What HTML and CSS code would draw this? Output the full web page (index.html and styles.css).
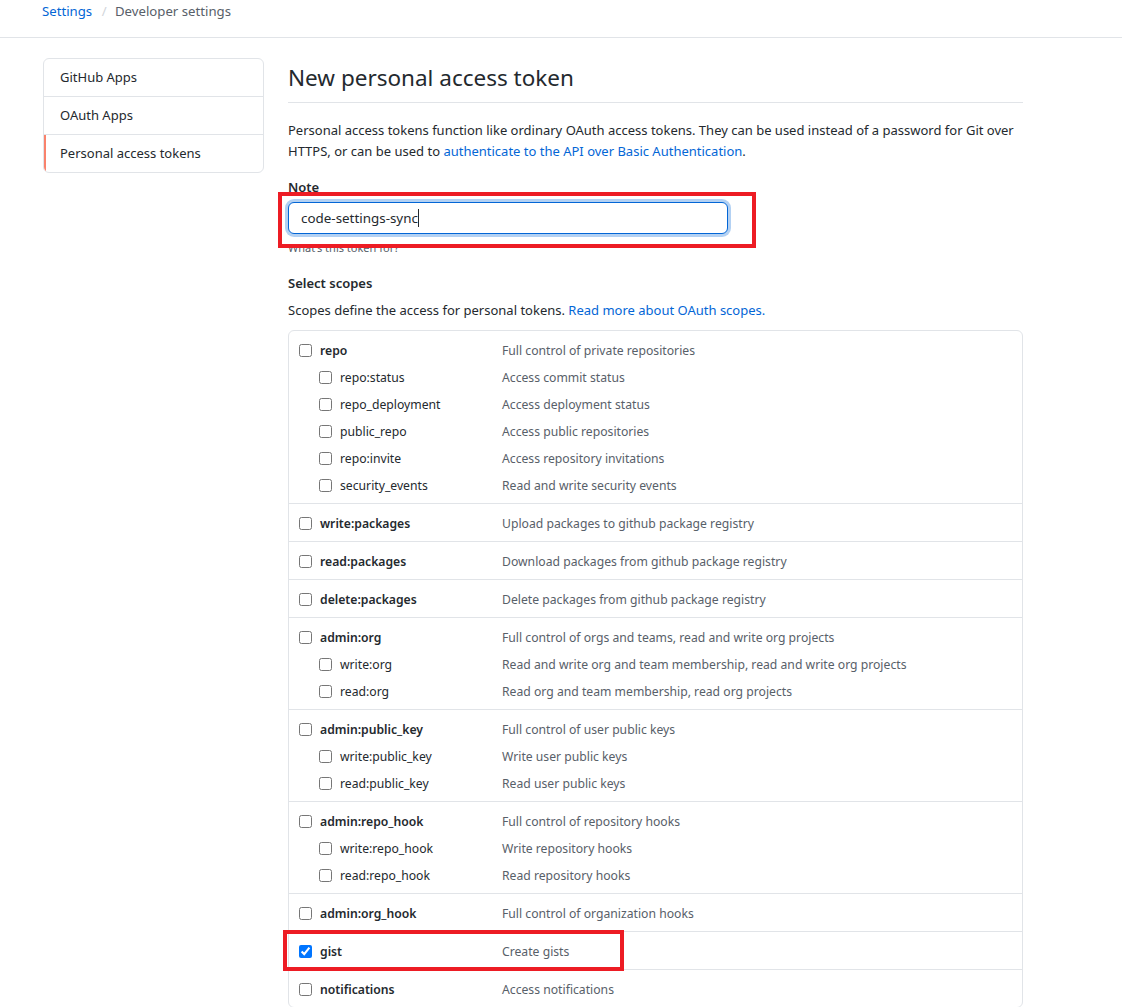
FILE: index.html
```html
<!DOCTYPE html>
<html lang="en">
<head>
<meta charset="utf-8">
<title>New personal access token</title>
<link rel="stylesheet" href="styles.css">
</head>
<body>
<nav class="breadcrumb">
  <a href="#" class="crumb-link">Settings</a>
  <span class="crumb-sep">/</span>
  <span class="crumb-current">Developer settings</span>
</nav>

<div class="layout">
  <aside class="sidebar">
    <a href="#" class="side-item">GitHub Apps</a>
    <a href="#" class="side-item">OAuth Apps</a>
    <a href="#" class="side-item side-item--active">Personal access tokens</a>
  </aside>

  <main class="main">
    <h2 class="subhead">New personal access token</h2>
    <p class="intro">Personal access tokens function like ordinary OAuth access tokens. They can be used instead of a password for Git over HTTPS, or can be used to <a href="#" class="link">authenticate to the API over Basic Authentication</a>.</p>

    <div class="form-group">
      <label class="form-label" for="note">Note</label>
      <div class="input-wrap">
        <input id="note" class="form-input" type="text" value="code-settings-sync">
        <span class="caret"></span>
        <div class="annot annot--note"></div>
      </div>
      <p class="note-hint">What’s this token for?</p>
    </div>

    <h3 class="scopes-title">Select scopes</h3>
    <p class="scopes-desc">Scopes define the access for personal tokens. <a href="#" class="link">Read more about OAuth scopes.</a></p>

    <div class="scopes">
      <div class="scope-group">
        <div class="scope-row"><label class="scope-name"><input type="checkbox" class="cb"><b>repo</b></label><span class="scope-desc">Full control of private repositories</span></div>
        <div class="scope-row scope-row--sub"><label class="scope-name"><input type="checkbox" class="cb">repo:status</label><span class="scope-desc">Access commit status</span></div>
        <div class="scope-row scope-row--sub"><label class="scope-name"><input type="checkbox" class="cb">repo_deployment</label><span class="scope-desc">Access deployment status</span></div>
        <div class="scope-row scope-row--sub"><label class="scope-name"><input type="checkbox" class="cb">public_repo</label><span class="scope-desc">Access public repositories</span></div>
        <div class="scope-row scope-row--sub"><label class="scope-name"><input type="checkbox" class="cb">repo:invite</label><span class="scope-desc">Access repository invitations</span></div>
        <div class="scope-row scope-row--sub"><label class="scope-name"><input type="checkbox" class="cb">security_events</label><span class="scope-desc">Read and write security events</span></div>
      </div>
      <div class="scope-group">
        <div class="scope-row"><label class="scope-name"><input type="checkbox" class="cb"><b>write:packages</b></label><span class="scope-desc">Upload packages to github package registry</span></div>
      </div>
      <div class="scope-group">
        <div class="scope-row"><label class="scope-name"><input type="checkbox" class="cb"><b>read:packages</b></label><span class="scope-desc">Download packages from github package registry</span></div>
      </div>
      <div class="scope-group">
        <div class="scope-row"><label class="scope-name"><input type="checkbox" class="cb"><b>delete:packages</b></label><span class="scope-desc">Delete packages from github package registry</span></div>
      </div>
      <div class="scope-group">
        <div class="scope-row"><label class="scope-name"><input type="checkbox" class="cb"><b>admin:org</b></label><span class="scope-desc">Full control of orgs and teams, read and write org projects</span></div>
        <div class="scope-row scope-row--sub"><label class="scope-name"><input type="checkbox" class="cb">write:org</label><span class="scope-desc">Read and write org and team membership, read and write org projects</span></div>
        <div class="scope-row scope-row--sub"><label class="scope-name"><input type="checkbox" class="cb">read:org</label><span class="scope-desc">Read org and team membership, read org projects</span></div>
      </div>
      <div class="scope-group">
        <div class="scope-row"><label class="scope-name"><input type="checkbox" class="cb"><b>admin:public_key</b></label><span class="scope-desc">Full control of user public keys</span></div>
        <div class="scope-row scope-row--sub"><label class="scope-name"><input type="checkbox" class="cb">write:public_key</label><span class="scope-desc">Write user public keys</span></div>
        <div class="scope-row scope-row--sub"><label class="scope-name"><input type="checkbox" class="cb">read:public_key</label><span class="scope-desc">Read user public keys</span></div>
      </div>
      <div class="scope-group">
        <div class="scope-row"><label class="scope-name"><input type="checkbox" class="cb"><b>admin:repo_hook</b></label><span class="scope-desc">Full control of repository hooks</span></div>
        <div class="scope-row scope-row--sub"><label class="scope-name"><input type="checkbox" class="cb">write:repo_hook</label><span class="scope-desc">Write repository hooks</span></div>
        <div class="scope-row scope-row--sub"><label class="scope-name"><input type="checkbox" class="cb">read:repo_hook</label><span class="scope-desc">Read repository hooks</span></div>
      </div>
      <div class="scope-group">
        <div class="scope-row"><label class="scope-name"><input type="checkbox" class="cb"><b>admin:org_hook</b></label><span class="scope-desc">Full control of organization hooks</span></div>
      </div>
      <div class="scope-group">
        <div class="scope-row"><label class="scope-name"><input type="checkbox" class="cb" checked><b>gist</b></label><span class="scope-desc">Create gists</span><div class="annot annot--gist"></div></div>
      </div>
      <div class="scope-group">
        <div class="scope-row"><label class="scope-name"><input type="checkbox" class="cb"><b>notifications</b></label><span class="scope-desc">Access notifications</span></div>
      </div>
    </div>
  </main>
</div>
</body>
</html>
```

FILE: styles.css
```css
html, body {
  margin: 0;
  padding: 0;
  background: #fff;
}

body {
  font-family: "Noto Sans", "Open Sans", sans-serif;
  font-size: 13px;
  line-height: 21px;
  color: #24292e;
  overflow: hidden;
}

a {
  text-decoration: none;
}

.breadcrumb {
  height: 38px;
  box-sizing: border-box;
  padding: 1px 0 0 42px;
  border-bottom: 1px solid #e1e4e8;
  font-size: 13.2px;
  line-height: 21px;
}

.crumb-link {
  color: #0366d6;
}

.crumb-sep {
  color: #d1d5da;
  margin: 0 5px 0 6px;
}

.crumb-current {
  color: #586069;
}

.layout {
  display: flex;
  align-items: flex-start;
  gap: 24px;
  padding: 20px 0 0 43px;
}

.sidebar {
  width: 221px;
  box-sizing: border-box;
  border: 1px solid #e1e4e8;
  border-radius: 6px;
  display: flex;
  flex-direction: column;
  overflow: hidden;
  flex-shrink: 0;
}

.side-item {
  display: block;
  padding: 8px 16px;
  line-height: 21px;
  color: #24292e;
  border-bottom: 1px solid #e1e4e8;
  position: relative;
}

.side-item:last-child {
  border-bottom: 0;
}

.side-item--active::before {
  content: "";
  position: absolute;
  left: 0;
  top: 0;
  bottom: 0;
  width: 2px;
  background: #f9826c;
}

.main {
  width: 735px;
  flex-shrink: 0;
}

.subhead {
  margin: 2px 0 0;
  padding-bottom: 6px;
  font-size: 22.5px;
  font-weight: 400;
  line-height: 36px;
  border-bottom: 1px solid #e1e4e8;
}

.intro {
  margin: 17px 0 0;
  line-height: 21px;
}

.link {
  color: #0366d6;
}

.form-group {
  margin-top: 15px;
}

.form-label {
  display: block;
  font-weight: 600;
  line-height: 21px;
}

.input-wrap {
  position: relative;
  margin-top: 4px;
  width: 440px;
}

.form-input {
  display: block;
  width: 440px;
  height: 32px;
  box-sizing: border-box;
  padding: 5px 12px;
  font-family: inherit;
  font-size: 13.4px;
  line-height: 20px;
  color: #24292e;
  border: 1px solid #0366d6;
  border-radius: 6px;
  box-shadow: 0 0 0 3px rgba(3, 102, 214, 0.3);
  outline: none;
  background: #fff;
}

.caret {
  position: absolute;
  left: 130px;
  top: 7px;
  width: 1px;
  height: 18px;
  background: #24292e;
}

.annot {
  position: absolute;
  border: 4px solid #ed1c24;
  box-sizing: border-box;
  pointer-events: none;
}

.annot--note {
  left: -10px;
  top: -10px;
  width: 478px;
  height: 56px;
}

.note-hint {
  margin: 5px 0 0;
  font-size: 11px;
  line-height: 18px;
  color: #586069;
}

.scopes-title {
  margin: 16px 0 0;
  font-size: 13px;
  font-weight: 600;
  line-height: 21px;
}

.scopes-desc {
  margin: 6px 0 0;
  line-height: 21px;
}

.scopes {
  margin-top: 9px;
  border: 1px solid #e1e4e8;
  border-radius: 6px;
  font-size: 12.2px;
}

.scope-group {
  padding: 6px 0 4px 10px;
  border-bottom: 1px solid #e1e4e8;
}

.scope-group:last-child {
  border-bottom: 0;
}

.scope-row {
  display: flex;
  align-items: center;
  height: 27px;
  position: relative;
}

.scope-name {
  width: 203px;
  flex-shrink: 0;
  display: flex;
  align-items: center;
  box-sizing: border-box;
  color: #24292e;
}

.scope-name b {
  font-weight: 600;
}

.scope-row--sub .scope-name {
  padding-left: 20px;
}

.cb {
  width: 13px;
  height: 13px;
  margin: 0 8px 0 0;
  flex-shrink: 0;
}

.scope-desc {
  color: #586069;
}

.annot--gist {
  left: -16px;
  top: -8px;
  width: 341px;
  height: 41px;
}
```
